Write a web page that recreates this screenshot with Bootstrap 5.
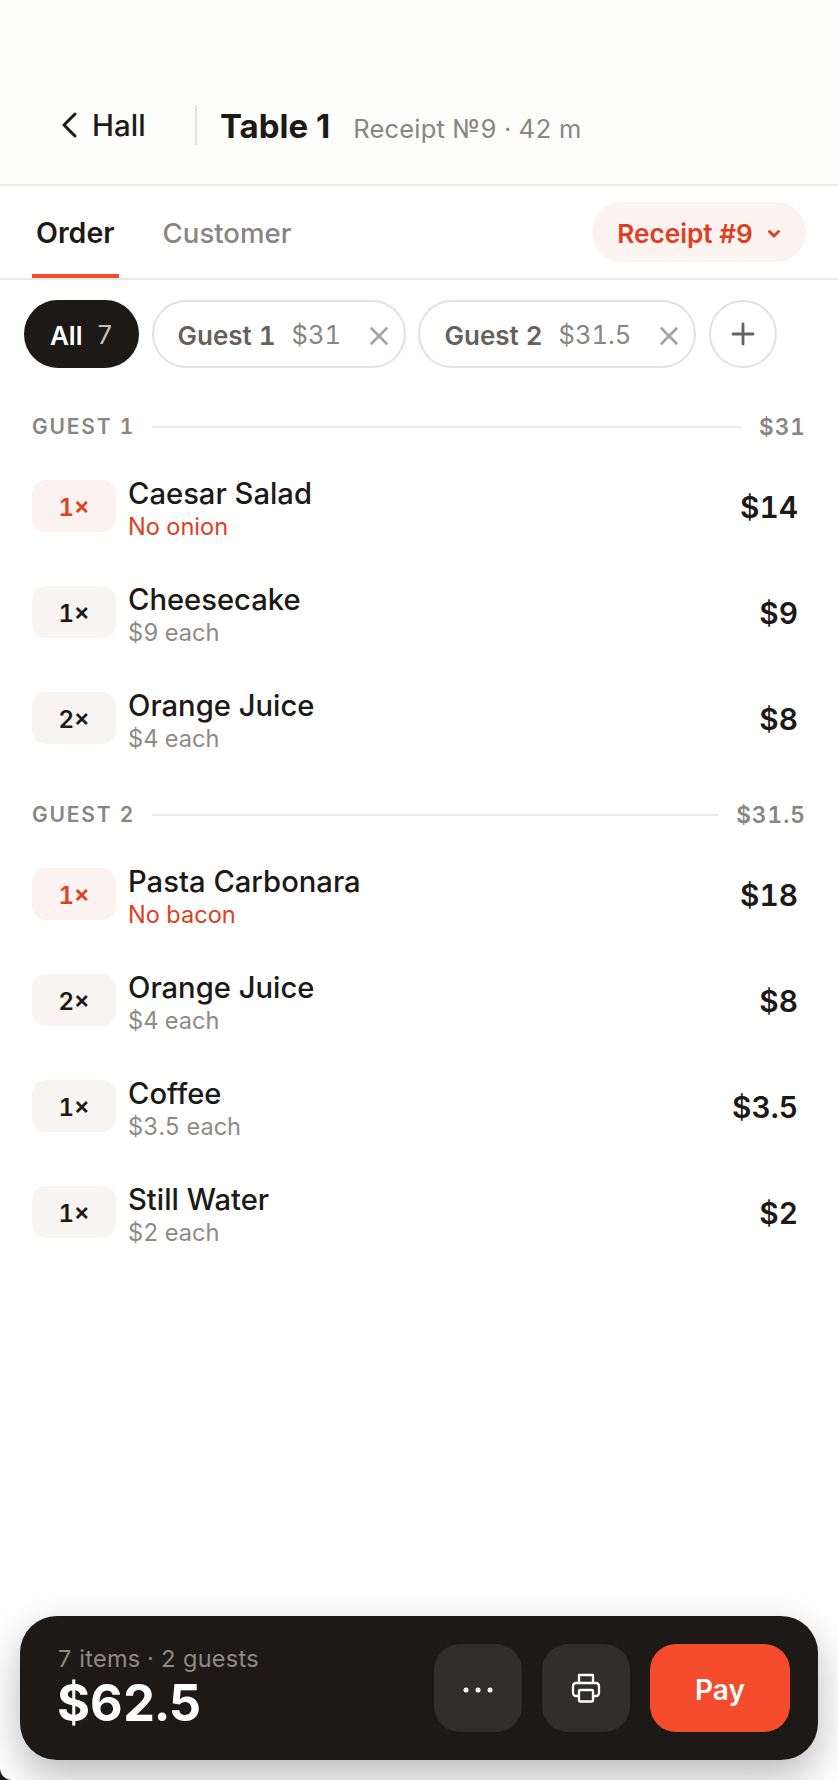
<!DOCTYPE html>
<html lang="en"><head><meta charset="utf-8">
<link href="https://cdn.jsdelivr.net/npm/bootstrap@5.3.0/dist/css/bootstrap.min.css" rel="stylesheet">
<style>
html,body{margin:0;height:1780px;overflow:hidden;background:#1c1917}
body{font-family:Inter,"Liberation Sans",sans-serif;color:#1c1917;font-variant-numeric:tabular-nums}
.app-frame{height:1780px;position:relative;background:#fff;overflow:hidden;border-bottom-left-radius:12px}
.top-head{height:186px;padding:0 32px 39px 61px;background:#fdfdfb;border-bottom:2px solid #ebe9e7}
.back-link{font-size:29.500px;font-weight:500;color:#1c1917;text-decoration:none;gap:14px;width:134px;line-height:40px}
.head-sep{width:2px;height:40px;background:#e4e2e0;margin-right:24px}
.title-wrap{margin-bottom:-3px}
.table-name{font-size:33px;font-weight:700;line-height:40px;font-variant-numeric:normal;margin-left:-1px}
.table-meta{font-size:25.500px;color:#8a8581;margin-left:23px;letter-spacing:.2px}
.tab-row{height:94px;border-bottom:2px solid #ebe9e7;padding:0 32px}
.tab-item{height:92px;font-size:27.600px;font-weight:500;color:#8a8581;padding:7px 4px 0;margin-right:40px;border-bottom:4px solid transparent;line-height:1}
.tab-item.on{color:#1c1917;font-size:28.500px;font-weight:600;border-bottom-color:#f44b2c}
.receipt-pill{height:60px;width:214px;border-radius:30px;background:#fcf3f0;color:#e03e22;font-size:26.200px;font-weight:600;gap:14px;border:0;padding:3px 0 0}
.chip-row{padding:20px 24px 0;gap:12.500px}
.chip-pill{height:68px;border-radius:34px;border:2px solid #e3e1df;font-size:26px;font-weight:600;color:#66615d;background:#fff;padding:3px 15px 0 24px}
.chip-pill.on{background:#1c1917;border-color:#1c1917;color:#fff;width:115px;padding:3px 0 0;justify-content:center}
.chip-amount{font-size:25.500px;font-weight:400;color:#8a8581;margin-left:16px}
.chip-pill.on .chip-amount{color:#c4c0bc;margin-left:14px}
.chip-x{margin-left:28px;color:#a6a29f}
.chip-add{width:68px;padding:0;justify-content:center;color:#66615d}
.guest-group{margin-top:45px}
.guest-group+.guest-group{margin-top:30px}
.guest-head{padding:0 32px;font-size:21px;font-weight:600;color:#8a8581;letter-spacing:1.800px;height:28px;gap:17px;margin-bottom:12px}
.guest-line{height:2px;background:#eeecea;flex:1}
.guest-sum{font-size:22.500px;letter-spacing:1.100px}
.order-row{height:106px;padding:0 8px 0 32px}
.qty-box{width:84px;height:52px;border-radius:14px;background:#f8f4f1;font-size:24px;font-weight:600;margin-right:12px;padding-top:3px}
.qty-box.flag{background:#fcf3f0;color:#e03e22}
.item-text{padding-top:7px}
.item-name{font-size:29.200px;font-weight:450;line-height:34px}
.item-note{font-size:23.600px;line-height:32px;color:#8f8a86}
.item-note.flag{color:#e03e22}
.item-price{font-size:29.800px;font-weight:600;margin-right:32px;padding-top:3px}
.pay-bar{position:absolute;left:20px;right:20px;top:1616px;height:144px;border-radius:37px;background:#1c1917;box-shadow:0 16px 40px rgba(0,0,0,.28);padding:0 28px 0 37px;color:#fff;gap:20px}
.bar-sum{padding-bottom:1px}
.bar-info{font-size:23.500px;color:#8f8a86;line-height:28px;letter-spacing:.3px;margin-bottom:3px}
.bar-total{font-size:50.500px;font-weight:700;line-height:54px}
.bar-btn{width:88px;height:88px;border-radius:26px;background:#302f2d;border:0;color:#fff;padding:0}
.bar-pay{width:140px;height:88px;border-radius:26px;background:#f44b2c;border:0;color:#fff;font-size:28px;font-weight:600;padding:4px 0 0}
</style></head>
<body>
<div class="app-frame">
<header class="top-head d-flex align-items-end">
  <a class="back-link d-flex align-items-center" href="#"><svg width="17" height="28" viewBox="0 0 17 28" fill="none" stroke="#1c1917" stroke-width="3" stroke-linecap="round" stroke-linejoin="round"><path d="M14 3 3 14l11 11"/></svg>Hall</a>
  <span class="head-sep"></span>
  <div class="title-wrap d-flex align-items-baseline"><span class="table-name">Table 1</span><span class="table-meta">Receipt №9 · 42 m</span></div>
</header>
<nav class="tab-row d-flex align-items-center">
  <div class="tab-item on d-flex align-items-center">Order</div>
  <div class="tab-item d-flex align-items-center">Customer</div>
  <button class="receipt-pill d-flex align-items-center justify-content-center ms-auto">Receipt #9<svg width="14" height="10" viewBox="0 0 14 10" fill="none" stroke="#e03e22" stroke-width="3" stroke-linecap="round" stroke-linejoin="round"><path d="M2.500 2.500 7 7l4.500-4.500"/></svg></button>
</nav>
<div class="chip-row d-flex">
  <div class="chip-pill on d-flex align-items-center">All<span class="chip-amount">7</span></div>
  <div class="chip-pill d-flex align-items-center">Guest 1<span class="chip-amount">$31</span><svg class="chip-x" width="20" height="20" viewBox="0 0 20 20" stroke="currentColor" stroke-width="2.600" stroke-linecap="round"><path d="M2.500 2.500l15 15M17.500 2.500l-15 15"/></svg></div>
  <div class="chip-pill d-flex align-items-center">Guest 2<span class="chip-amount">$31.5</span><svg class="chip-x" width="20" height="20" viewBox="0 0 20 20" stroke="currentColor" stroke-width="2.600" stroke-linecap="round"><path d="M2.500 2.500l15 15M17.500 2.500l-15 15"/></svg></div>
  <div class="chip-pill chip-add d-flex align-items-center"><svg width="24" height="24" viewBox="0 0 24 24" stroke="currentColor" stroke-width="2.800" stroke-linecap="round"><path d="M12 2v20M2 12h20"/></svg></div>
</div>
<section class="guest-group">
  <div class="guest-head d-flex align-items-center"><span>GUEST 1</span><span class="guest-line"></span><span class="guest-sum">$31</span></div>
  <div class="order-row d-flex align-items-center"><div class="qty-box flag d-flex align-items-center justify-content-center">1×</div><div class="item-text flex-grow-1"><div class="item-name">Caesar Salad</div><div class="item-note flag">No onion</div></div><div class="item-price">$14</div></div>
  <div class="order-row d-flex align-items-center"><div class="qty-box d-flex align-items-center justify-content-center">1×</div><div class="item-text flex-grow-1"><div class="item-name">Cheesecake</div><div class="item-note">$9 each</div></div><div class="item-price">$9</div></div>
  <div class="order-row d-flex align-items-center"><div class="qty-box d-flex align-items-center justify-content-center">2×</div><div class="item-text flex-grow-1"><div class="item-name">Orange Juice</div><div class="item-note">$4 each</div></div><div class="item-price">$8</div></div>
</section>
<section class="guest-group">
  <div class="guest-head d-flex align-items-center"><span>GUEST 2</span><span class="guest-line"></span><span class="guest-sum">$31.5</span></div>
  <div class="order-row d-flex align-items-center"><div class="qty-box flag d-flex align-items-center justify-content-center">1×</div><div class="item-text flex-grow-1"><div class="item-name">Pasta Carbonara</div><div class="item-note flag">No bacon</div></div><div class="item-price">$18</div></div>
  <div class="order-row d-flex align-items-center"><div class="qty-box d-flex align-items-center justify-content-center">2×</div><div class="item-text flex-grow-1"><div class="item-name">Orange Juice</div><div class="item-note">$4 each</div></div><div class="item-price">$8</div></div>
  <div class="order-row d-flex align-items-center"><div class="qty-box d-flex align-items-center justify-content-center">1×</div><div class="item-text flex-grow-1"><div class="item-name">Coffee</div><div class="item-note">$3.5 each</div></div><div class="item-price">$3.5</div></div>
  <div class="order-row d-flex align-items-center"><div class="qty-box d-flex align-items-center justify-content-center">1×</div><div class="item-text flex-grow-1"><div class="item-name">Still Water</div><div class="item-note">$2 each</div></div><div class="item-price">$2</div></div>
</section>
<footer class="pay-bar d-flex align-items-center">
  <div class="bar-sum me-auto"><div class="bar-info">7 items · 2 guests</div><div class="bar-total">$62.5</div></div>
  <button class="bar-btn"><svg width="30" height="6" viewBox="0 0 30 6" fill="#fff"><circle cx="3" cy="3" r="2.500"/><circle cx="15" cy="3" r="2.500"/><circle cx="27" cy="3" r="2.500"/></svg></button>
  <button class="bar-btn"><svg width="30" height="30" viewBox="0 0 30 30" fill="none" stroke="#fff" stroke-width="2.300" stroke-linejoin="round"><path d="M8 10V2h14v8M8 23H5a3 3 0 0 1-3-3v-7a3 3 0 0 1 3-3h20a3 3 0 0 1 3 3v7a3 3 0 0 1-3 3h-3"/><rect x="8" y="17" width="14" height="11.500" rx="1"/></svg></button>
  <button class="bar-pay">Pay</button>
</footer>
</div>
</body></html>
